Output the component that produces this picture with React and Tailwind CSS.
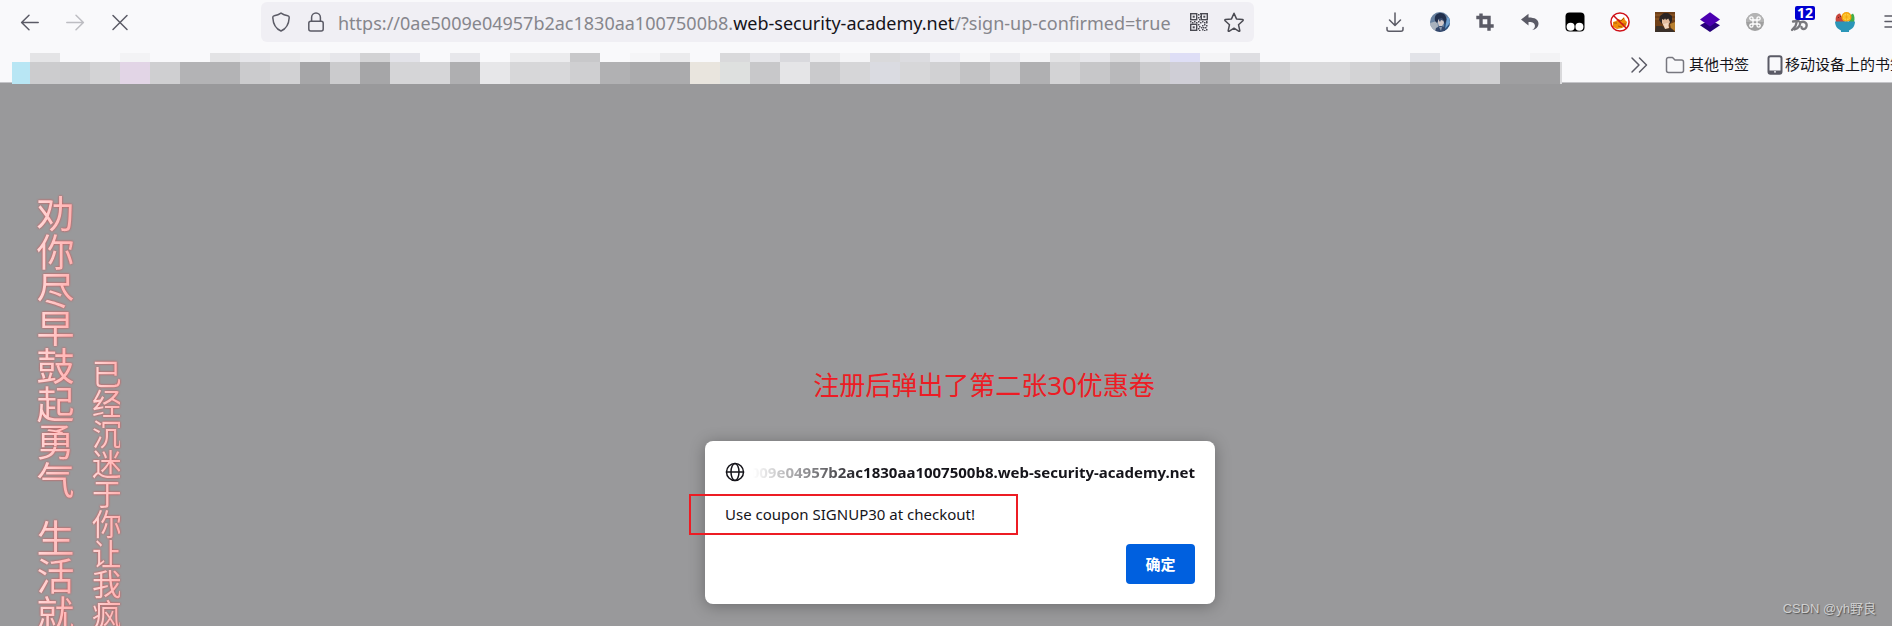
import React from "react";

const UI_FONT = "font-['Noto_Sans','Noto_Sans_CJK_SC',sans-serif]";

const URL_PARTS = {
  before: "https://0ae5009e04957b2ac1830aa1007500b8.",
  domain: "web-security-academy.net",
  after: "/?sign-up-confirmed=true",
};

/* Upper and lower colour of each redacted bookmark column. */
const MOSAIC = [
  ["bg-[#e4e4e6]", "bg-[#ccccce]"],
  ["bg-[#f9f9fb]", "bg-[#cacacc]"],
  ["bg-[#f9f9fb]", "bg-[#d3d3d5]"],
  ["bg-[#f3f3f5]", "bg-[#e2d5e6]"],
  ["bg-[#f9f9fb]", "bg-[#cfcfd1]"],
  ["bg-[#f9f9fb]", "bg-[#b3b3b5]"],
  ["bg-[#e3e3e5]", "bg-[#b3b3b5]"],
  ["bg-[#e6e6ea]", "bg-[#cbcbcd]"],
  ["bg-[#e9e9eb]", "bg-[#d1d1d3]"],
  ["bg-[#ececee]", "bg-[#a6a6a8]"],
  ["bg-[#e6e6ea]", "bg-[#cbcbcd]"],
  ["bg-[#d2d2d4]", "bg-[#a6a6a8]"],
  ["bg-[#e3e3e9]", "bg-[#d5d5d7]"],
  ["bg-[#f9f9fb]", "bg-[#d6d6d8]"],
  ["bg-[#e7e7eb]", "bg-[#afafb1]"],
  ["bg-[#f9f9fb]", "bg-[#e7e7e9]"],
  ["bg-[#ececee]", "bg-[#d7d7d9]"],
  ["bg-[#ebebed]", "bg-[#d8d8da]"],
  ["bg-[#c8c8ca]", "bg-[#cfcfd1]"],
  ["bg-[#f9f9fb]", "bg-[#b1b1b3]"],
  ["bg-[#f5f5f7]", "bg-[#ababad]"],
  ["bg-[#ebebed]", "bg-[#ababad]"],
  ["bg-[#f9f9fb]", "bg-[#e9e5de]"],
  ["bg-[#d9d9db]", "bg-[#dee0df]"],
  ["bg-[#e5e5e9]", "bg-[#c8c8ca]"],
  ["bg-[#d9d9dd]", "bg-[#e5e5e7]"],
  ["bg-[#ebebed]", "bg-[#cacacc]"],
  ["bg-[#f4f4f6]", "bg-[#d6d6d8]"],
  ["bg-[#d9d9db]", "bg-[#dadbe1]"],
  ["bg-[#dcdce0]", "bg-[#d7d7d9]"],
  ["bg-[#ebebf0]", "bg-[#d1d1d3]"],
  ["bg-[#f5f5f7]", "bg-[#c3c3c5]"],
  ["bg-[#ebebef]", "bg-[#d2d2d4]"],
  ["bg-[#f4f4f6]", "bg-[#b0b0b2]"],
  ["bg-[#e3e3e5]", "bg-[#d3d3d5]"],
  ["bg-[#e7e7eb]", "bg-[#c7c7c9]"],
  ["bg-[#dadadc]", "bg-[#b9b9bb]"],
  ["bg-[#e5e5e9]", "bg-[#cbcbcd]"],
  ["bg-[#dedef6]", "bg-[#cfced6]"],
  ["bg-[#f4f4f6]", "bg-[#b0b0b2]"],
  ["bg-[#dedee2]", "bg-[#c7c7c9]"],
  ["bg-[#f9f9fb]", "bg-[#d1d1d3]"],
  ["bg-[#f9f9fb]", "bg-[#dadadc]"],
  ["bg-[#f9f9fb]", "bg-[#dadadc]"],
  ["bg-[#f9f9fb]", "bg-[#d3d3d5]"],
  ["bg-[#f9f9fb]", "bg-[#c9c9cb]"],
  ["bg-[#e2e3e8]", "bg-[#bebec0]"],
  ["bg-[#f9f9fb]", "bg-[#cbcbcd]"],
  ["bg-[#f9f9fb]", "bg-[#cfcfd1]"],
  ["bg-[#f9f9fb]", "bg-[#9f9fa1]"],
  ["bg-[#f3f3f5]", "bg-[#9f9fa1]"],
];

function Icon({ children, className = "" }) {
  return (
    <svg
      viewBox="0 0 20 20"
      className={`size-5 shrink-0 ${className}`}
      fill="none"
      stroke="currentColor"
      strokeWidth="1.5"
      strokeLinecap="round"
      strokeLinejoin="round"
      aria-hidden="true"
    >
      {children}
    </svg>
  );
}

function ToolButton({ label, children, disabled }) {
  return (
    <button
      type="button"
      aria-label={label}
      disabled={disabled}
      className="relative flex h-10 w-[45px] shrink-0 items-center justify-center text-[#5b5b66] disabled:text-[#bdbdc2]"
    >
      {children}
    </button>
  );
}

const BackIcon = () => (
  <Icon>
    <path d="M18.2 10.5H2M9 3.2L1.6 10.5 9 17.8" />
  </Icon>
);
const ForwardIcon = () => (
  <Icon>
    <path d="M1.8 10.5H18M11 3.2l7.400 7.300L11 17.800" />
  </Icon>
);
const StopIcon = () => (
  <Icon>
    <path d="M3 3.500l14 14M17 3.500l-14 14" />
  </Icon>
);
const ShieldIcon = () => (
  <Icon className="text-[#5b5b66]">
    <path d="M10 1.100c2 1.500 4.200 2.300 6.800 2.700 1 .2 1.500.9 1.400 1.900C17.800 12.300 15.500 16.600 10 19 4.500 16.600 2.200 12.300 1.800 5.700c-.1-1 .4-1.700 1.400-1.900C5.800 3.400 8 2.600 10 1.100z" />
  </Icon>
);
const LockIcon = () => (
  <Icon className="text-[#5b5b66]">
    <rect x="2.800" y="9.200" width="14.400" height="9.800" rx="2" />
    <path d="M5.600 9V5.400a4.400 4.400 0 0 1 8.800 0V9" />
  </Icon>
);

function QrIcon() {
  const dots = [
    [8, 1], [10, 3], [8, 4], [10, 0], [9, 6], [0, 8], [2, 9], [4, 8], [6, 9], [8, 8], [10, 9],
    [12, 8], [14, 9], [16, 8], [8, 11], [9, 13], [8, 15], [9, 17], [12, 12], [14, 11], [16, 12],
    [11, 14], [13, 14], [15, 14], [12, 16], [14, 17], [16, 16], [16, 9],
  ];
  return (
    <svg viewBox="0 0 18 18" className="size-[18px]" aria-hidden="true">
      <g fill="none" stroke="#4a4a52" strokeWidth="1.4">
        <rect x=".7" y=".7" width="6" height="6" />
        <rect x="11.300" y=".7" width="6" height="6" />
        <rect x=".7" y="11.300" width="6" height="6" />
      </g>
      <g fill="#4a4a52">
        <rect x="2.700" y="2.700" width="2" height="2" />
        <rect x="13.300" y="2.700" width="2" height="2" />
        <rect x="2.700" y="13.300" width="2" height="2" />
        {dots.map(([x, y]) => (
          <rect key={`${x}-${y}`} x={x} y={y} width="1.500" height="1.500" />
        ))}
      </g>
    </svg>
  );
}

const StarIcon = () => (
  <Icon className="text-[#4a4a52]">
    <path d="M10 1.300l2.500 5.600 6.100.7c.6.100.7.700.3 1.100l-4.400 4 1.300 6c.1.500-.4.800-.8.600L10 16.200l-5 3.100c-.4.200-.9-.1-.8-.6l1.300-6-4.400-4c-.4-.4-.3-1 .3-1.100l6.100-.7z" />
  </Icon>
);
const DownloadIcon = () => (
  <Icon>
    <path d="M10 .9v12.300M4.500 8l5.500 5.500L15.500 8M2 15.600v1.600a2 2 0 0 0 2 2h12a2 2 0 0 0 2-2v-1.600" />
  </Icon>
);

const AvatarIcon = () => (
  <svg viewBox="0 0 20 20" className="size-5" aria-hidden="true">
    <defs>
      <clipPath id="avatar-clip"><circle cx="10" cy="10" r="10" /></clipPath>
    </defs>
    <g clipPath="url(#avatar-clip)">
      <rect width="20" height="20" fill="#66809f" />
      <path d="M0 11l7-2 2 11H0z" fill="#a9b2bd" />
      <path d="M14 8l6-3v15h-6z" fill="#2d527f" />
      <path d="M17 6l3-2v7l-5 6z" fill="#6fa0cf" />
      <path d="M5 9C4 3 7 1 11 1s6 4 5 8l-1 3-2-4-4-1-2 4z" fill="#22304d" />
      <path d="M8 7l5 1 1 3-2 3H9l-1-3z" fill="#d3c9c9" />
      <path d="M8 7l4-1 2 3-3-1-1 2z" fill="#3b4c6e" />
      <path d="M6 16l4-2 5 1 1 5H5z" fill="#34486c" />
      <path d="M9 15l2 4 1-4z" fill="#8d9aaf" />
    </g>
  </svg>
);
const CropIcon = () => (
  <svg viewBox="0 0 20 20" className="size-5" aria-hidden="true">
    <path d="M6 1.500V14h12.700M1.300 5.500H14V18.800" fill="none" stroke="#5b5b66" strokeWidth="3.400" />
  </svg>
);
const UndoIcon = () => (
  <svg viewBox="0 0 20 20" className="size-5" aria-hidden="true">
    <path d="M8.500 1.800L1 7.600l7.500 6v-3.700c4-.2 6.600 1 6.400 4.300-.1 1.700-1.200 3-3.200 4 4-.4 6.800-2.900 6.800-6.600 0-4.200-3.500-6.200-10-6.200z" fill="#5b5b66" />
  </svg>
);
const TampermonkeyIcon = () => (
  <svg viewBox="0 0 20 20" className="size-5" aria-hidden="true">
    <rect x=".5" y=".5" width="19" height="19" rx="4" fill="#000" />
    <circle cx="5.600" cy="14.700" r="4" fill="#fff" />
    <circle cx="14.400" cy="14.700" r="4" fill="#fff" />
  </svg>
);
const BlockedFoxIcon = () => (
  <svg viewBox="0 0 20 20" className="size-5" aria-hidden="true">
    <circle cx="10" cy="10" r="9" fill="#fff" />
    <path d="M3 10l3-1 2-2 3 1 3-3 1 3 2 2-1 4-4 2-5 1-4-2z" fill="#f08c0a" />
    <path d="M8 8l3 1 3-3M4 11h3M12 12h4M8 14l4 1" stroke="#a85808" fill="none" />
    <circle cx="10" cy="10" r="9.100" fill="none" stroke="#cf1118" strokeWidth="1.500" />
    <path d="M3.700 3.700l12.600 12.600" stroke="#cf1118" strokeWidth="1.500" />
  </svg>
);
const PortraitIcon = () => (
  <svg viewBox="0 0 20 20" className="size-5" aria-hidden="true">
    <rect width="20" height="20" fill="#704018" />
    <path d="M0 3h20M0 7h5M15 7h5" stroke="#98602a" />
    <path d="M4 8l1-4 4-3h4l4 3v5l-2 3H7z" fill="#2b2422" />
    <path d="M7 7l6-1 2 4-2 4H9l-2-3z" fill="#e3bc9d" />
    <path d="M7 7l2 1 1-2 1 2 3-2-2-3H8z" fill="#2b2422" />
    <path d="M0 20l1-6 6 0 4 3 5-1 4 4z" fill="#3a3029" />
    <path d="M8 12l5-1 1 5-4 1z" fill="#f2d7bf" />
    <path d="M15 12l5-2v9l-4-3z" fill="#b88030" />
  </svg>
);
const LayersIcon = () => (
  <svg viewBox="0 0 20 20" className="size-5" aria-hidden="true">
    <path d="M0 13.200L4 11h12l4 2.200L10 20z" fill="#27017a" />
    <path d="M10 .3L20 7.400 10 14.500 0 7.400z" fill="#4b00b0" />
  </svg>
);
const CommandIcon = () => (
  <svg viewBox="0 0 20 20" className="size-5" aria-hidden="true">
    <circle cx="10" cy="10" r="9" fill="#a0a0a0" />
    <path d="M1 10a9 9 0 0 1 18 0z" fill="#b4b4b4" />
    <path d="M8 8h4v4H8zM8 8H6.500A1.600 1.600 0 1 1 8 6.400zM12 8V6.400A1.600 1.600 0 1 1 13.600 8zM12 12h1.600a1.600 1.600 0 1 1-1.600 1.600zM8 12v1.600A1.600 1.600 0 1 1 6.400 12z" fill="none" stroke="#fff" strokeWidth="1.300" />
  </svg>
);
const SnakeIcon = () => (
  <svg viewBox="0 0 20 20" className="size-5" aria-hidden="true">
    <path d="M3 9.500l4-.5-1.500 5L2 18M8.500 9c2.500 1 1.500 4 .5 5.500S6 17 4.500 17.500M10.500 10.500c3.500-2 7 .5 6 4s-5 3-5 .5" fill="none" stroke="#77777c" strokeWidth="2.300" strokeLinecap="round" />
  </svg>
);
const FruitBowlIcon = () => (
  <svg viewBox="0 0 20 20" className="size-5" aria-hidden="true">
    <path d="M1 10c-1-4 0-8 4-8.500L10 10z" fill="#c8463c" />
    <path d="M14 10V4l4-2.500c1.500 2 2 5.500 1 8.500z" fill="#41ad49" />
    <circle cx="11.500" cy="5" r="5" fill="#f5a30b" />
    <circle cx="11.500" cy="5" r="3.600" fill="#ffd03d" />
    <path d="M11.500 1.500v7M8 5h7M9 2.500l5 5M14 2.500l-5 5" stroke="#f5a30b" strokeWidth=".7" />
    <path d="M3 5l1 1M5 4l1 1" stroke="#6d2424" />
    <path d="M0 9.500h20c0 4.500-2.500 7.500-6 9v1.500H6v-1.500c-3.500-1.500-6-4.500-6-9z" fill="#2b96b8" />
  </svg>
);
const MenuIcon = () => (
  <Icon>
    <path d="M5 4h15M5 9.500h15M5 15h15" />
  </Icon>
);

const EXTENSIONS = [
  ["下载", DownloadIcon],
  ["账户", AvatarIcon],
  ["截图", CropIcon],
  ["撤销", UndoIcon],
  ["Tampermonkey", TampermonkeyIcon],
  ["代理", BlockedFoxIcon],
  ["头像", PortraitIcon],
  ["图层", LayersIcon],
  ["快捷键", CommandIcon],
  ["脚本", SnakeIcon, "12"],
  ["水果碗", FruitBowlIcon],
  ["菜单", MenuIcon],
];

function AddressBar() {
  const { before, domain, after } = URL_PARTS;
  return (
    <form className="flex h-10 min-w-0 flex-1 items-center rounded-md bg-[#f0eff4] px-2.5" onSubmit={(e) => e.preventDefault()}>
      <div className="flex shrink-0 gap-[15px]">
        <ShieldIcon />
        <LockIcon />
      </div>
      <div className="ml-3 grid min-w-0 flex-1 overflow-hidden pt-px text-[18px] leading-6">
        <input
          aria-label="地址"
          defaultValue={before + domain + after}
          spellCheck={false}
          className="col-start-1 row-start-1 min-w-0 bg-transparent text-transparent caret-black outline-none"
        />
        <span aria-hidden="true" className="pointer-events-none col-start-1 row-start-1 whitespace-nowrap text-[#86868c]">
          {before}
          <span className="text-[#15141a]">{domain}</span>
          {after}
        </span>
      </div>
      <button type="button" aria-label="二维码" className="mr-4 shrink-0"><QrIcon /></button>
      <button type="button" aria-label="为此页添加书签" className="shrink-0"><StarIcon /></button>
    </form>
  );
}

function Toolbar() {
  return (
    <div className="flex h-11 items-center overflow-hidden pl-[7px]">
      <nav className="flex shrink-0" aria-label="导航">
        <ToolButton label="后退"><BackIcon /></ToolButton>
        <ToolButton label="前进" disabled><ForwardIcon /></ToolButton>
        <ToolButton label="停止"><StopIcon /></ToolButton>
      </nav>
      <div className="w-[119px] shrink-0" />
      <AddressBar />
      <div className="w-[118px] shrink-0" />
      <div className="-mr-5 flex shrink-0">
        {EXTENSIONS.map(([label, Glyph, badge]) => (
          <ToolButton key={label} label={label}>
            <Glyph />
            {badge && (
              <span className="absolute top-1 right-[7px] w-5 rounded-xs bg-[#0000d0] text-center text-[14px] leading-[14px] font-bold text-white">
                {badge}
              </span>
            )}
          </ToolButton>
        ))}
      </div>
    </div>
  );
}

function BookmarksBar() {
  return (
    <div className="flex h-[38px] overflow-visible pl-3 text-[15px] text-[#15141a]">
      <div className="mt-[9px] flex h-[31px] shrink-0" aria-hidden="true">
        <div className="flex w-[18px] flex-col">
          <div className="h-[9px] bg-[#f9f9fb]" />
          <div className="flex-1 bg-[#b8e6f4]" />
        </div>
        {MOSAIC.map(([top, bottom], i) => (
          <div key={i} className="flex w-[30px] flex-col">
            <div className={`h-[9px] ${top}`} />
            <div className={`flex-1 ${bottom}`} />
          </div>
        ))}
        <div className="mt-[9px] w-0.5 bg-[#d9d9db]" />
      </div>
      <div className="flex min-w-0 flex-1 items-center justify-start overflow-hidden pt-[3px] pl-[67px] whitespace-nowrap">
        <button type="button" aria-label="更多书签" className="shrink-0 text-[#5b5b66]">
          <Icon><path d="M3 3l7 7-7 7M10.500 3l7 7-7 7" /></Icon>
        </button>
        <button type="button" className="ml-4 flex shrink-0 items-center gap-1">
          <Icon className="text-[#77777f]">
            <path d="M1.500 15.500v-11a2 2 0 0 1 2-2h4l2.500 2.500h6.500a2 2 0 0 1 2 2v8.500a2 2 0 0 1-2 2h-13a2 2 0 0 1-2-2z" />
          </Icon>
          其他书签
        </button>
        <button type="button" className="ml-4 flex shrink-0 items-center">
          <svg viewBox="0 0 20 20" className="size-5" aria-hidden="true">
            <rect x="3.500" y="1.200" width="13" height="17.600" rx="2" fill="none" stroke="#5b5b66" strokeWidth="2" />
            <path d="M4 15.500h12v3H4z" fill="#5b5b66" />
            <path d="M9 16.800h2" stroke="#f9f9fb" strokeWidth="1.200" />
          </svg>
          移动设备上的书签
        </button>
      </div>
    </div>
  );
}

function LyricColumns() {
  const glyphs = "bg-linear-to-r from-[#ffdada] to-[#ffb0b0] bg-clip-text text-transparent [writing-mode:vertical-rl]";
  return (
    <aside className="pointer-events-none absolute top-28 left-[35px] flex gap-[17px] whitespace-nowrap [filter:drop-shadow(0_0_1px_#d84848)]">
      <div className="flex flex-col gap-5 text-[38px] leading-[38px]">
        <p className={glyphs}>劝你尽早鼓起勇气</p>
        <p className={glyphs}>生活就</p>
      </div>
      <div className="pt-[164px] text-[30px] leading-[30px]">
        <p className={glyphs}>已经沉迷于你让我疯</p>
      </div>
    </aside>
  );
}

function AlertDialog() {
  return (
    <section
      role="alertdialog"
      aria-labelledby="alert-origin"
      aria-describedby="alert-message"
      className="relative mt-10 w-[510px] rounded-lg bg-white p-5 text-[#15141a] shadow-[0_2px_16px_rgba(0,0,0,0.3)]"
    >
      <header className="flex h-[22px] items-center gap-2">
        <Icon className="text-[#15141a]">
          <circle cx="10" cy="10" r="8.500" />
          <ellipse cx="10" cy="10" rx="4" ry="8.500" />
          <path d="M1.500 10h17" />
        </Icon>
        <div className="flex min-w-0 flex-1 justify-end overflow-hidden [mask-image:linear-gradient(to_right,transparent,black_112px)]">
          <h1 id="alert-origin" className="text-[15px] leading-[22px] font-bold whitespace-nowrap">
            0ae5009e04957b2ac1830aa1007500b8.web-security-academy.net
          </h1>
        </div>
      </header>
      <p id="alert-message" className="mt-5 text-[15px] leading-[22px]">Use coupon SIGNUP30 at checkout!</p>
      <div className="mt-[19px] flex justify-end">
        <button type="button" className="h-10 w-[69px] rounded bg-[#0060df] text-[15px] font-bold text-white">确定</button>
      </div>
      <div className="pointer-events-none absolute top-[53px] -left-4 h-[41px] w-[329px] border-2 border-[#ed1c24]" aria-hidden="true" />
    </section>
  );
}

export default function App() {
  return (
    <div className={`flex h-screen flex-col overflow-hidden bg-[#99999b] ${UI_FONT}`}>
      <header className="shrink-0 border-b border-[#c4c4c8] bg-[#f9f9fb]">
        <Toolbar />
        <BookmarksBar />
      </header>
      <main className="relative flex min-h-0 flex-1 flex-col items-center overflow-hidden pt-[286px] pl-7">
        <LyricColumns />
        <p className="ml-12 text-[26px] leading-8 text-[#ed1c24]">注册后弹出了第二张30优惠卷</p>
        <AlertDialog />
        <footer className="absolute right-4 bottom-2 font-['Liberation_Sans','Noto_Sans_CJK_SC',sans-serif] text-[13px] leading-[18px] text-[#d0d0d0] [text-shadow:1px_1px_1px_#555]">
          CSDN @yh野良
        </footer>
      </main>
    </div>
  );
}
